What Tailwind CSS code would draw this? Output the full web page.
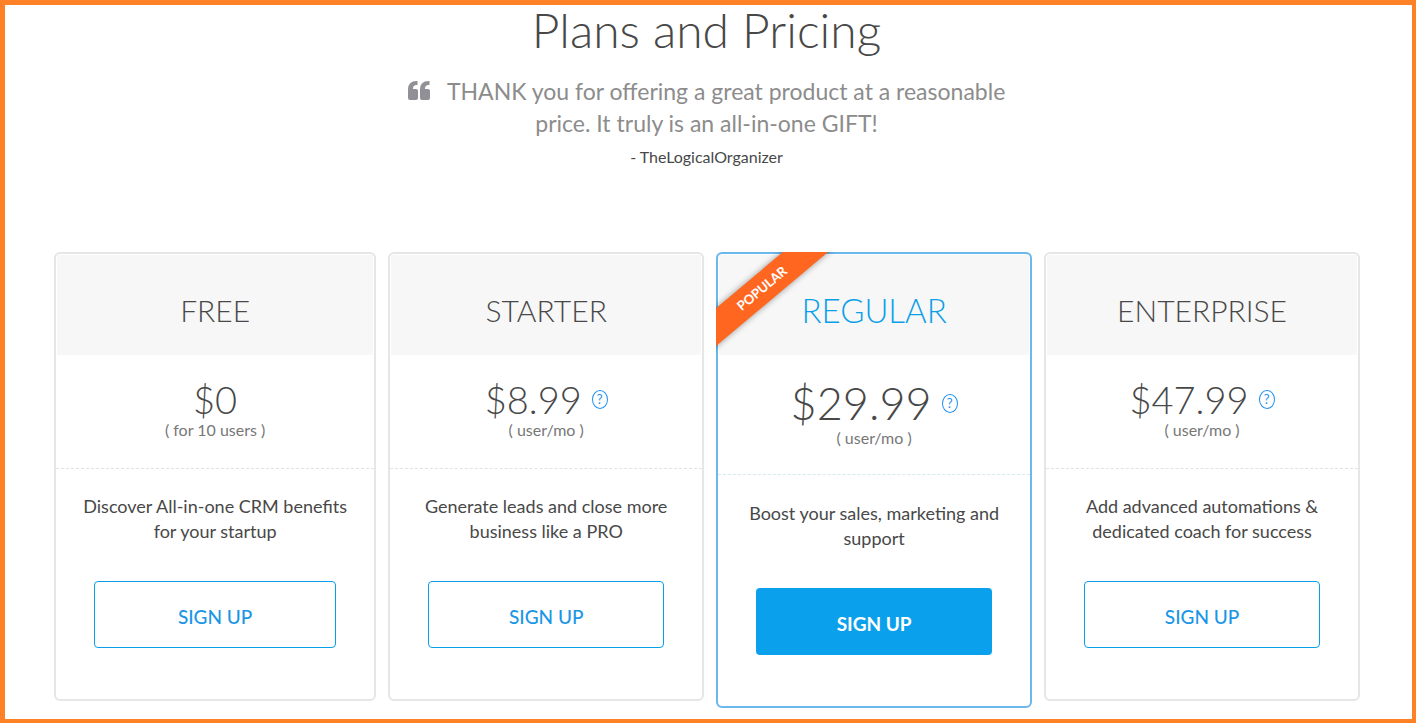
<!DOCTYPE html>
<html lang="en">
<head>
  <meta charset="UTF-8" />
  <meta name="viewport" content="width=device-width, initial-scale=1.0" />
  <title>Plans and Pricing</title>
  <script src="https://cdn.jsdelivr.net/npm/@tailwindcss/browser@4"></script>
</head>
<body class="min-h-screen bg-white border-t-5 border-l-5 border-r-4 border-b-4 border-[#ff8127] font-['Lato',sans-serif] text-[#484848]">

  <header class="flex flex-col items-center pr-1 text-center">
    <h1 class="text-[48px] leading-[50px] font-light">Plans and Pricing</h1>
    <blockquote class="mt-5 max-w-[620px] text-[23px] leading-8 text-[#8c8c8c]">
      <svg class="inline-block w-[22px] h-[19px] mr-3 align-baseline" viewBox="0 0 22 19" fill="#919096" aria-hidden="true">
        <path d="M8.500 0H9.500V4H8.500Q5 4 5 7.500V8H8Q10 8 10 10V17Q10 19 8 19H2Q0 19 0 17V8.500Q0 0 8.500 0Z" />
        <path d="M20.500 0H21.500V4H20.500Q17 4 17 7.500V8H20Q22 8 22 10V17Q22 19 20 19H14Q12 19 12 17V8.500Q12 0 20.500 0Z" />
      </svg>
      THANK you for offering a great product at a reasonable price. It truly is an all-in-one GIFT!
    </blockquote>
    <p class="mt-2 text-base leading-5">- TheLogicalOrganizer</p>
  </header>

  <main class="grid grid-cols-[51fr_50fr_50fr_50fr] items-start gap-3 pt-[85px] pl-[49px] pr-[52px] pb-[11px] text-center">

    <!-- Free -->
    <section class="rounded-md border-2 border-[#e6e6e6]">
      <h2 class="m-px h-[100px] pt-[35px] bg-[#f7f7f7] text-[30px] leading-10 font-light">FREE</h2>
      <div class="h-[113px] pt-[22px] border-b border-dashed border-[#e2e2e2]">
        <p class="text-[38px] leading-[42px] font-light">$0</p>
        <p class="text-base leading-5 text-[#777]">( for 10 users )</p>
      </div>
      <p class="px-6 pt-[25px] text-lg leading-[25px]">Discover All-in-one CRM benefits for your startup</p>
      <div class="px-[38px] pt-[37px] pb-[51px]">
        <button class="w-full h-[67px] pt-1.5 rounded border border-[#0b9fe9] text-[19px] font-medium text-[#1b96e6]">SIGN UP</button>
      </div>
    </section>

    <!-- Starter -->
    <section class="rounded-md border-2 border-[#e6e6e6]">
      <h2 class="m-px h-[100px] pt-[35px] bg-[#f7f7f7] text-[30px] leading-10 font-light">STARTER</h2>
      <div class="h-[113px] pt-[22px] border-b border-dashed border-[#e2e2e2]">
        <div class="flex items-center justify-center gap-2.5">
          <p class="text-[38px] leading-[42px] font-light">$8.99</p>
          <button class="w-4 h-[19px] rounded-[50%] border border-[#1e90f0] text-[13px] leading-4 text-[#1e90f0]" aria-label="About this price">?</button>
        </div>
        <p class="text-base leading-5 text-[#777]">( user/mo )</p>
      </div>
      <p class="px-6 pt-[25px] text-lg leading-[25px]">Generate leads and close more business like a PRO</p>
      <div class="px-[38px] pt-[37px] pb-[51px]">
        <button class="w-full h-[67px] pt-1.5 rounded border border-[#0b9fe9] text-[19px] font-medium text-[#1b96e6]">SIGN UP</button>
      </div>
    </section>

    <!-- Regular -->
    <section class="relative rounded-md border-2 border-[#6bb8ec]">
      <div class="absolute -top-0.5 -left-0.5 w-32 h-28 overflow-hidden">
        <span class="absolute top-[22px] -left-11 w-[180px] h-[29px] -rotate-40 bg-[#ff6720] text-[13px] leading-[29px] font-bold text-white shadow-[0_0_6px_rgba(0,0,0,0.4)]">POPULAR</span>
      </div>
      <h2 class="m-px h-[100px] pt-[35px] bg-[#f7f7f7] text-[33px] leading-10 font-light text-[#0b9fe9]">REGULAR</h2>
      <div class="h-[119px] pt-[22px] border-b border-dashed border-[#d5eaf0]">
        <div class="flex items-center justify-center gap-2.5">
          <p class="text-[45px] leading-[50px] font-light">$29.99</p>
          <button class="w-4 h-[19px] rounded-[50%] border border-[#1e90f0] text-[13px] leading-4 text-[#1e90f0]" aria-label="About this price">?</button>
        </div>
        <p class="text-base leading-5 text-[#777]">( user/mo )</p>
      </div>
      <p class="px-6 pt-[26px] text-lg leading-[25px]">Boost your sales, marketing and support</p>
      <div class="px-[38px] pt-[37px] pb-[51px]">
        <button class="w-full h-[67px] pt-1.5 rounded bg-[#0ba0ec] text-[19px] font-bold text-white">SIGN UP</button>
      </div>
    </section>

    <!-- Enterprise -->
    <section class="rounded-md border-2 border-[#e6e6e6]">
      <h2 class="m-px h-[100px] pt-[35px] bg-[#f7f7f7] text-[30px] leading-10 font-light">ENTERPRISE</h2>
      <div class="h-[113px] pt-[22px] border-b border-dashed border-[#e2e2e2]">
        <div class="flex items-center justify-center gap-2.5">
          <p class="text-[38px] leading-[42px] font-light">$47.99</p>
          <button class="w-4 h-[19px] rounded-[50%] border border-[#1e90f0] text-[13px] leading-4 text-[#1e90f0]" aria-label="About this price">?</button>
        </div>
        <p class="text-base leading-5 text-[#777]">( user/mo )</p>
      </div>
      <p class="px-6 pt-[25px] text-lg leading-[25px]">Add advanced automations &amp; dedicated coach for success</p>
      <div class="px-[38px] pt-[37px] pb-[51px]">
        <button class="w-full h-[67px] pt-1.5 rounded border border-[#0b9fe9] text-[19px] font-medium text-[#1b96e6]">SIGN UP</button>
      </div>
    </section>

  </main>

</body>
</html>
